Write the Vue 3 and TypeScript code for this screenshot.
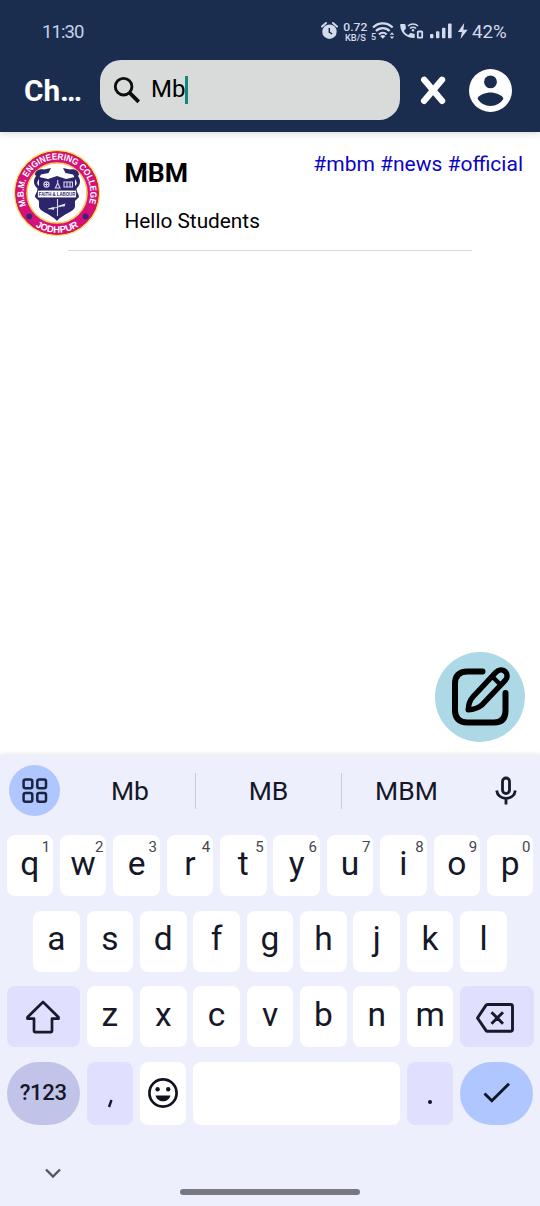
<script setup lang="ts">
interface Key {
  label: string
  hint?: string
}

const topRow: Key[] = 'qwertyuiop'.split('').map((label, i) => ({ label, hint: String((i + 1) % 10) }))
const homeRow: Key[] = 'asdfghjkl'.split('').map((label) => ({ label }))
const bottomRow: Key[] = 'zxcvbnm'.split('').map((label) => ({ label }))
const tags: string[] = ['#mbm', '#news', '#official']
</script>

<template>
  <div class="screen">
    <header class="header">
      <div class="status">
        <span class="time">11:30</span>
        <svg class="status-icons" width="160" height="45" viewBox="0 0 160 45">
          <g fill="#d3daeb" stroke="none">
            <circle cx="19.5" cy="21.7" r="7.2" />
            <path d="M12 16.6l4-3.6M27 16.6l-4-3.6" stroke="#d3daeb" stroke-width="2" stroke-linecap="round" />
            <path d="M19.3 18v4l2.8 2" fill="none" stroke="#1b2d4f" stroke-width="1.5" />
            <text x="33.300" y="21.400" font-size="11.800" font-weight="500" textLength="24" lengthAdjust="spacingAndGlyphs">0.72</text>
            <text x="35" y="30.600" font-size="9.600" font-weight="500" textLength="21" lengthAdjust="spacingAndGlyphs">KB/S</text>
            <text x="61" y="29.600" font-size="9" font-weight="500">5</text>
            <g fill="none" stroke="#d3daeb" stroke-width="2.200">
              <path d="M63 17.600a13.700 13.700 0 0 1 19.600 0" />
              <path d="M66 21.100a9.300 9.300 0 0 1 13.600 0" />
              <path d="M69 24.400a5.200 5.200 0 0 1 7.600 0" />
            </g>
            <path d="M70.200 26.200a3.800 3.800 0 0 1 5.200 0l-2.600 2.600z" />
            <path d="M79.800 24.800l2.200-2.600 2.200 2.600zM79.800 26.400h4.400l-2.200 2.500z" />
            <path d="M91.200 14h3.300c.5 0 .8.3.9.8l.5 3.300c.1.400 0 .7-.3 1l-1.700 1.600c1 2 2.400 3.400 4.300 4.400l1.700-1.700c.3-.3.6-.4 1-.3l3 .6c.5.1.8.5.8.9v2.500c0 .6-.4 1-.9 1C95.800 28 90.200 22 90.200 15c0-.6.4-1 1-1z" />
            <g fill="none" stroke="#d3daeb" stroke-width="1.500">
              <path d="M98 16.100a7 7 0 0 1 10 0M100 18.500a4.200 4.200 0 0 1 6 0" />
              <rect x="107.800" y="21.500" width="4.400" height="6.200" rx=".6" stroke-width="1.800" />
            </g>
            <circle cx="103" cy="20.300" r="1.200" />
            <rect x="120" y="24" width="3.400" height="4.200" rx=".8" />
            <rect x="126" y="21.300" width="3.400" height="6.900" rx=".8" />
            <rect x="132" y="17.700" width="3.400" height="10.500" rx=".8" />
            <rect x="138" y="13.400" width="3.600" height="14.800" rx=".8" />
            <path d="M154.200 13l-6.300 9h4l-1.400 7 7.200-9.300h-4.300z" />
          </g>
        </svg>
        <span class="battery">42%</span>
      </div>
      <div class="appbar">
        <h1 class="title">Ch…</h1>
        <div class="search">
          <svg width="28" height="28" viewBox="0 0 28 28" fill="none" stroke="#0c0d0d">
            <circle cx="10.600" cy="10.700" r="8.300" stroke-width="2.900" />
            <path d="M16.500 16.700l9.200 9.100" stroke-width="3.800" />
          </svg>
          <span class="query">Mb</span>
          <i class="caret"></i>
        </div>
        <svg class="close" width="26" height="30" viewBox="0 0 26 30">
          <path d="M4.200 4.800l17.800 21M22 4.800L4.200 25.800" stroke="#fff" stroke-width="6.400" stroke-linecap="round" />
        </svg>
        <svg class="account" width="43" height="43" viewBox="2 2 20 20" fill="#fff">
          <path fill-rule="evenodd" d="M12 2a10 10 0 1 0 0 20 10 10 0 0 0 0-20zm0 3a3 3 0 1 1 0 6 3 3 0 0 1 0-6zm0 14.200a7.200 7.200 0 0 1-6-3.220c.03-1.990 4-3.080 6-3.080s5.970 1.090 6 3.080a7.200 7.200 0 0 1-6 3.220z" />
        </svg>
      </div>
    </header>

    <main class="chats">
      <article class="chat">
        <svg class="logo" width="88" height="88" viewBox="0 0 88 88">
          <defs>
            <path id="ringTop" d="M13.500 57.600A33.400 33.400 0 1 1 74.500 57.600" />
            <path id="ringBottom" d="M11 66.250A39.800 39.800 0 0 0 77 66.250" />
          </defs>
          <circle cx="44" cy="44" r="42.500" fill="#d6117c" stroke="#f5e06a" stroke-width="1.400" />
          <circle cx="44" cy="44" r="41.200" fill="none" stroke="#c92135" stroke-width="1" />
          <circle cx="44" cy="44" r="30" fill="#fff" stroke="#f2cf55" stroke-width="1.600" />
          <g class="ring-text">
            <text font-size="9"><textPath href="#ringTop" startOffset="1" textLength="128" lengthAdjust="spacingAndGlyphs">M.B.M. ENGINEERING COLLEGE</textPath></text>
            <text font-size="9.400" text-anchor="middle"><textPath href="#ringBottom" startOffset="50%">JODHPUR</textPath></text>
          </g>
          <circle cx="16.300" cy="67.500" r="2.900" fill="#3a2379" />
          <circle cx="72.600" cy="67.500" r="2.900" fill="#3a2379" />
          <g fill="#2c256c">
            <path d="M26 28l9 2 9-3 9 3 9-2v13.200H26zM26 49h36v8c0 6-11 7-18 15-7-8-18-9-18-15z" />
            <path d="M22 26c0-4 4-6.500 9-5.500l7-1.500-2.500 5-7.500 1.500-2 3.500zM66 26c0-4-4-6.500-9-5.500l-7-1.500 2.500 5 7.500 1.500 2 3.500z" />
            <path d="M24 26c-5 5-3 10 0 13 2 2-2 6-2 9l4 4v-8c3-3 1-6-1-8-2-3 1-5 2-8zM64 26c5 5 3 10 0 13-2 2 2 6 2 9l-4 4v-8c-3-3-1-6 1-8 2-3-1-5-2-8z" />
          </g>
          <path d="M24.500 41.200h39v7.600h-39z" fill="#fff" stroke="#2c256c" stroke-width=".8" />
          <text class="motto" x="25.800" y="47.300" font-size="6.200" textLength="36.500" lengthAdjust="spacingAndGlyphs">FAITH &amp; LABOUR</text>
          <g fill="none" stroke="#d8d7ee" stroke-width="1.100">
            <circle cx="33.500" cy="35.500" r="2.600" />
            <path d="M33.500 33.500v4M31.500 35.500h4M44.700 31v3l-2.300 5h4.600l-2.300-5M51 33h8.500v5H51zM54 33v5M57 33v5M44.500 50v17M35.500 60l8-1.500 8-2.500" />
          </g>
          <path d="M35 59.500l6-1.500v3zM44.500 57l8-2.500-1 3z" fill="#e6e5f4" />
        </svg>
        <div class="chat-text">
          <div class="chat-head">
            <h2 class="name">MBM</h2>
            <span class="tags">{{ tags.join(' ') }}</span>
          </div>
          <p class="message">Hello Students</p>
        </div>
      </article>
      <hr class="divider" />
      <button class="compose">
        <svg width="62" height="62" viewBox="0 0 62 62" fill="none" stroke="#000" stroke-width="6" stroke-linecap="round" stroke-linejoin="round">
          <path d="M33.500 5.500H18.500C10 5.500 6 10 6 17.500v27c0 7.500 4 12 12.500 12h26.500c8 0 11.500-4.500 11.500-12V27" />
          <path stroke-width="5.400" d="M46.800 6.300c2.800-3 6.800-3 9.200-.9 2.700 2.400 2.800 6.200.2 9L32.500 39.300c-3.500 3-7.800 4.200-13.300 4.500.2-5 1.800-9.700 4.800-13z" />
          <path d="M43.700 11l7.800 7.800" stroke-width="4.400" />
        </svg>
      </button>
    </main>

    <section class="keyboard">
      <div class="suggestions">
        <span class="apps">
          <svg width="26" height="26" viewBox="0 0 26 26" fill="none" stroke="#1b2440" stroke-width="2.500">
            <rect x="1.600" y="1.600" width="8.700" height="8.700" rx="2" />
            <rect x="15.300" y="1.600" width="8.700" height="8.700" rx="2" />
            <rect x="1.600" y="15" width="8.700" height="8.700" rx="2" />
            <rect x="15.300" y="15" width="8.700" height="8.700" rx="2" />
          </svg>
        </span>
        <span class="word first">Mb</span>
        <span class="word">MB</span>
        <span class="word last">MBM</span>
        <svg class="mic" width="24" height="30" viewBox="0 0 24 30" fill="none" stroke="#151a2c" stroke-width="2.800">
          <rect x="8.500" y="2" width="7" height="15.600" rx="3.500" />
          <path d="M2.700 14.500c.6 5 4.500 7.800 9.300 7.800s8.700-2.800 9.300-7.800M12 22.500v6" />
        </svg>
      </div>

      <div class="row">
        <span v-for="key in topRow" :key="key.label" class="key">
          {{ key.label }}<small class="hint">{{ key.hint }}</small>
        </span>
      </div>
      <div class="row home">
        <span v-for="key in homeRow" :key="key.label" class="key">{{ key.label }}</span>
      </div>
      <div class="row">
        <span class="key wide soft">
          <svg width="36" height="34" viewBox="0 0 36 34" fill="none" stroke="#151a2c" stroke-width="2.700" stroke-linejoin="round">
            <path d="M18 2L2.500 17.300v1.400H9v12.400q0 1 1 1h16q1 0 1-1V18.700h6.500v-1.400z" />
          </svg>
        </span>
        <span v-for="key in bottomRow" :key="key.label" class="key">{{ key.label }}</span>
        <span class="key wide soft">
          <svg class="backspace" width="38" height="32" viewBox="0 0 38 32" fill="none" stroke="#151a2c" stroke-width="2.900" stroke-linejoin="round">
            <path d="M11.500 2.500h23q2 0 2 2v22.800q0 2-2 2h-23q-1 0-1.600-.9L1.500 16 9.900 3.400q.6-.9 1.600-.9zM15.500 10.200L27 21.700M27 10.200L15.500 21.700" />
          </svg>
        </span>
      </div>
      <div class="row last-row">
        <span class="key wide pill symbols">?123</span>
        <span class="key soft">
          <svg width="8" height="12" viewBox="0 0 8 12" class="comma"><path d="M5.500 2L3 9" stroke="#151a2c" stroke-width="2.400" /></svg>
        </span>
        <span class="key">
          <svg width="32" height="32" viewBox="0 0 32 32">
            <circle cx="16" cy="16" r="13.600" fill="none" stroke="#10131f" stroke-width="2.700" />
            <circle cx="10.600" cy="12.300" r="2.200" fill="#10131f" />
            <circle cx="21.200" cy="12.300" r="2.200" fill="#10131f" />
            <path d="M8.500 18.500h15c-1 3.600-4 5.800-7.500 5.800s-6.500-2.200-7.500-5.800z" fill="#10131f" />
          </svg>
        </span>
        <span class="key space"></span>
        <span class="key soft"><i class="dot"></i></span>
        <span class="key wide pill enter">
          <svg width="28" height="22" viewBox="0 0 28 22" fill="none" stroke="#0d1526" stroke-width="2.900">
            <path d="M1.500 11.500l7.300 7.200L26 1.800" />
          </svg>
        </span>
      </div>
      <div class="nav">
        <svg class="chevron" width="16" height="11" viewBox="0 0 16 11" fill="none" stroke="#55565f" stroke-width="2.400">
          <path d="M1 1.500l7 7 7-7" />
        </svg>
        <i class="home-bar"></i>
      </div>
    </section>
  </div>
</template>

<style>
body {
  margin: 0;
}
</style>

<style scoped>
.screen {
  width: 540px;
  height: 1206px;
  display: flex;
  flex-direction: column;
  overflow: hidden;
  background: #fff;
  font-family: Roboto, "Liberation Sans", sans-serif;
  color: #000;
}
svg {
  display: block;
  flex: none;
}
.header {
  height: 132px;
  flex: none;
  background: #1b2d4f;
  box-shadow: 0 1px 7px rgba(0, 0, 0, 0.17);
}
.status {
  display: flex;
  height: 60px;
  padding-left: 42px;
  color: #d3daeb;
  font-size: 18.7px;
  line-height: 22px;
}
.time {
  width: 268px;
  padding-top: 21px;
  font-size: 18.5px;
  color: #c6d0e9;
  letter-spacing: -0.900px;
}
.status-icons {
  margin-top: 10px;
}
.battery {
  padding-top: 21px;
  margin-left: 2px;
}
.appbar {
  display: flex;
  align-items: center;
  height: 60px;
}
.title {
  margin: 0 0 0 24px;
  width: 76px;
  flex: none;
  color: #fff;
  font-size: 29.700px;
  line-height: 34px;
  padding-top: 2px;
  white-space: nowrap;
}
.search {
  display: flex;
  align-items: center;
  width: 300px;
  height: 60px;
  box-sizing: border-box;
  padding-left: 13px;
  border-radius: 21px;
  background: #d9dbda;
}
.query {
  margin-left: 10px;
  margin-top: -3px;
  font-size: 24px;
  line-height: 28px;
}
.caret {
  width: 3px;
  height: 28px;
  background: #118879;
}
.close {
  margin-left: 20px;
}
.account {
  margin-left: 23px;
}
.chats {
  position: relative;
  height: 623px;
  flex: none;
}
.chat {
  display: flex;
  padding: 17px 17px 0 13px;
  height: 101px;
}
.logo {
  font-family: "Liberation Sans", sans-serif;
}
.ring-text {
  fill: #fff;
  font-weight: 700;
}
.motto {
  fill: #2c256c;
  font-weight: 700;
}
.chat-text {
  flex: 1;
  padding-left: 23.500px;
}
.chat-head {
  display: flex;
  justify-content: space-between;
  align-items: flex-start;
}
.name {
  margin: 9px 0 0;
  font-size: 26.600px;
  line-height: 30px;
}
.tags {
  margin-top: 2px;
  font-size: 21px;
  line-height: 26px;
  color: #0b04c8;
  white-space: nowrap;
}
.message {
  margin: 20px 0 0;
  font-size: 20.800px;
  line-height: 26px;
}
.divider {
  width: 404px;
  height: 1px;
  margin: 0 0 0 68px;
  border: 0;
  background: #dadada;
}
.compose {
  position: absolute;
  right: 15px;
  bottom: 13px;
  width: 90px;
  height: 90px;
  display: grid;
  place-items: center;
  padding: 0;
  border: 0;
  border-radius: 50%;
  background: #add8e6;
}
.keyboard {
  flex: 1;
  background: #eeeffd;
  box-shadow: 0 -1px 4px rgba(60, 60, 40, 0.12);
  color: #151828;
}
.suggestions {
  display: flex;
  align-items: center;
  height: 71px;
  padding-left: 9px;
  font-size: 26.500px;
}
.apps {
  display: grid;
  place-items: center;
  width: 51px;
  height: 51px;
  border-radius: 50%;
  background: #afc6ff;
}
.word {
  width: 146px;
  height: 36px;
  line-height: 35px;
  text-align: center;
  border-right: 1px solid #cacbd7;
  box-sizing: border-box;
}
.first {
  width: 136px;
  padding-left: 5px;
}
.word.last {
  width: 129px;
  border: 0;
}
.mic {
  margin-left: 22.500px;
}
.row {
  display: flex;
  gap: 6.800px;
  height: 61px;
  padding: 0 6.500px;
  margin-top: 14.500px;
}
.suggestions + .row {
  margin-top: 9px;
}
.home {
  padding: 0 33.200px;
}
.key {
  position: relative;
  flex: 1 1 0;
  height: 61px;
  box-sizing: border-box;
  padding-top: 11.800px;
  border-radius: 8px;
  background: #fff;
  font-size: 33.500px;
  line-height: 34px;
  text-align: center;
}
.key:has(svg) {
  display: grid;
  place-items: center;
  padding: 0;
}
.hint {
  position: absolute;
  right: 3px;
  top: 4px;
  font-size: 15px;
  line-height: 16px;
  color: #454650;
}
.wide {
  flex: 0 0 73.300px;
}
.soft {
  background: #e0e0fe;
}
.backspace {
  margin: 3px 3px 0 0;
}
.last-row,
.last-row .key {
  height: 63px;
}
.pill {
  border-radius: 32px;
}
.symbols {
  padding-top: 14px;
  background: #c2c3e9;
  font-size: 22px;
  font-weight: 500;
  letter-spacing: -0.300px;
}
.space {
  flex: 0 0 207px;
}
.enter {
  background: #afc6ff;
}
.comma {
  margin-top: 22px;
}
.dot {
  display: block;
  width: 4px;
  height: 4px;
  margin: 27px auto 0;
  border-radius: 50%;
  background: #10131f;
}
.nav {
  display: flex;
  padding: 43px 0 0 44.500px;
}
.home-bar {
  width: 180px;
  height: 6px;
  margin: 21px 0 0 119.500px;
  border-radius: 3px;
  background: #787980;
}
</style>
